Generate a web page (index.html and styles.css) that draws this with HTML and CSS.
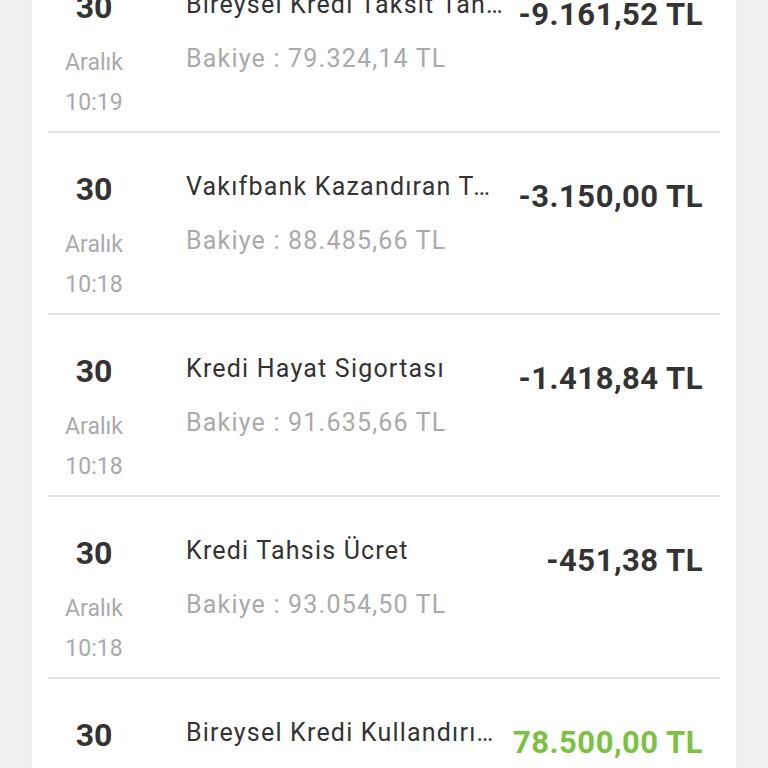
FILE: index.html
```html
<!DOCTYPE html>
<html lang="tr">
<head>
  <meta charset="UTF-8" />
  <meta name="viewport" content="width=device-width, initial-scale=1" />
  <title>Hesap Hareketleri</title>
  <link rel="stylesheet" href="styles.css">
</head>
<body>

<div class="card">
  <div class="list">
    <!-- hareket -->
    <div class="row">
      <div class="date">
        <div class="day">30</div>
        <div class="month">Aralık</div>
        <div class="time">10:19</div>
      </div>
      <div class="info">
        <div class="title">Bireysel Kredi Taksit Tahsilatı</div>
        <div class="balance">Bakiye : 79.324,14 TL</div>
      </div>
      <div class="amount">-9.161,52 TL</div>
    </div>

    <div class="row">
      <div class="date">
        <div class="day">30</div>
        <div class="month">Aralık</div>
        <div class="time">10:18</div>
      </div>
      <div class="info">
        <div class="title">Vakıfbank Kazandıran Tarife</div>
        <div class="balance">Bakiye : 88.485,66 TL</div>
      </div>
      <div class="amount">-3.150,00 TL</div>
    </div>

    <div class="row">
      <div class="date">
        <div class="day">30</div>
        <div class="month">Aralık</div>
        <div class="time">10:18</div>
      </div>
      <div class="info">
        <div class="title">Kredi Hayat Sigortası</div>
        <div class="balance">Bakiye : 91.635,66 TL</div>
      </div>
      <div class="amount">-1.418,84 TL</div>
    </div>

    <div class="row">
      <div class="date">
        <div class="day">30</div>
        <div class="month">Aralık</div>
        <div class="time">10:18</div>
      </div>
      <div class="info">
        <div class="title">Kredi Tahsis Ücret</div>
        <div class="balance">Bakiye : 93.054,50 TL</div>
      </div>
      <div class="amount">-451,38 TL</div>
    </div>

    <div class="row">
      <div class="date">
        <div class="day">30</div>
        <div class="month">Aralık</div>
        <div class="time">10:17</div>
      </div>
      <div class="info">
        <div class="title">Bireysel Kredi Kullandırımı</div>
        <div class="balance">Bakiye : 14.554,50 TL</div>
      </div>
      <div class="amount plus">78.500,00 TL</div>
    </div>
  </div>
</div>

</body>
</html>
```

FILE: styles.css
```css
html, body {
  margin: 0;
  height: 100%;
  overflow: hidden;
}
body {
  font-family: Roboto, "Noto Sans", sans-serif;
  background-color: #f1f0ee;
  color: #333;
}
.card {
  width: 704px;
  margin: 0 auto;
  min-height: 100%;
  background: #fff;
  padding: 0 16px;
  box-sizing: border-box;
  box-shadow: 0 0 2px rgba(0,0,0,0.06);
}
.list {
  margin-top: -49px;
}
.row {
  display: flex;
  height: 180px;
  border-bottom: 2px solid #e3e3e3;
}
.date {
  width: 92px;
  flex: none;
  text-align: center;
  padding-top: 34px;
}
.day {
  font-size: 32px;
  font-weight: 700;
  line-height: 44px;
  color: #333;
}
.month, .time {
  font-size: 23px;
  line-height: 40px;
  color: #aaa;
}
.month {
  margin-top: 14px;
}
.info {
  flex: 1;
  min-width: 0;
  margin-left: 46px;
  padding-top: 34px;
}
.title, .balance {
  font-size: 25px;
  letter-spacing: 1.2px;
  line-height: 40px;
  white-space: nowrap;
  overflow: hidden;
  text-overflow: ellipsis;
}
.title {
  color: #333;
}
.balance {
  color: #aaa;
  margin-top: 14px;
}
.amount {
  flex: none;
  padding: 44px 17px 0 14px;
  font-size: 31px;
  font-weight: 700;
  letter-spacing: 0.5px;
  line-height: 40px;
  color: #333;
}
.amount.plus {
  color: #7cc242;
}
```
